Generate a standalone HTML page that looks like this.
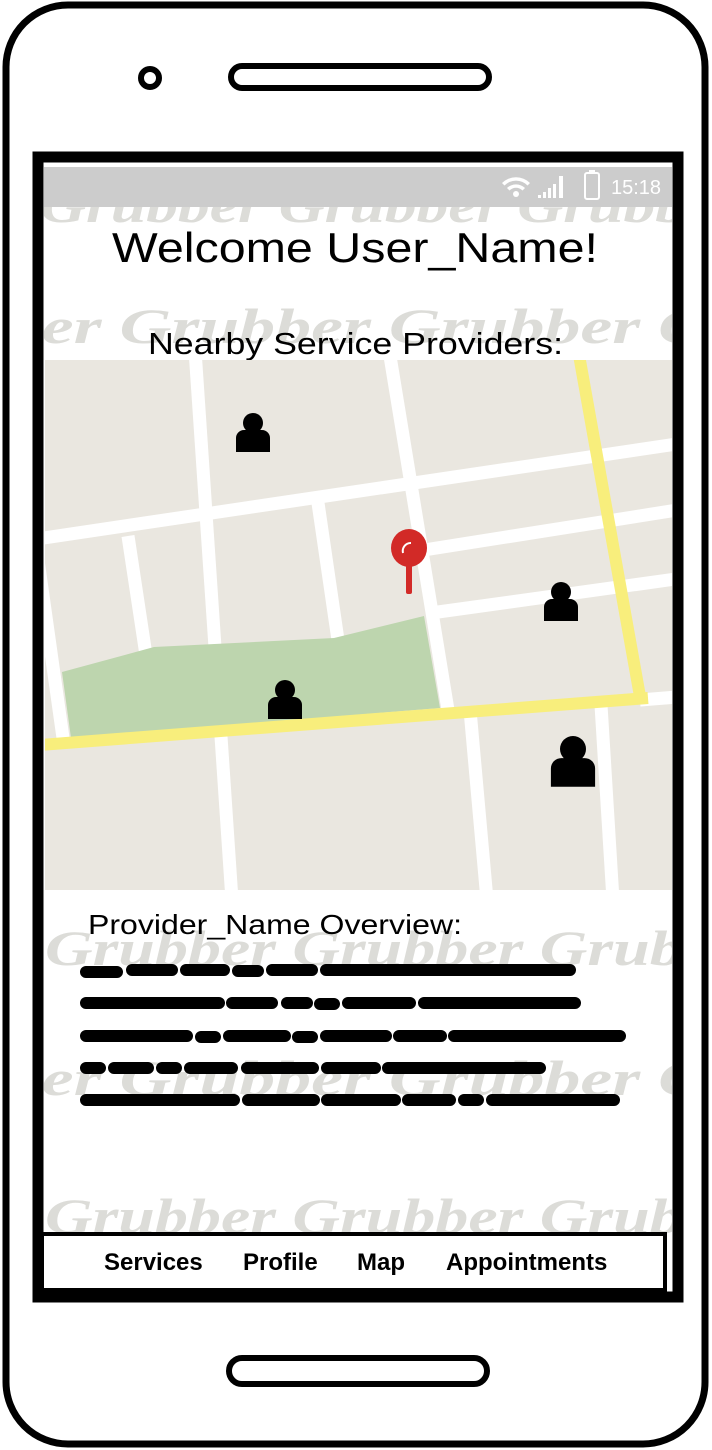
<!DOCTYPE html>
<html><head><meta charset="utf-8"><style>
html,body{margin:0;padding:0;background:#fff;}
svg{display:block}
text{font-family:"Liberation Sans",sans-serif;}
text.wm{font-family:"Liberation Serif",serif;}
</style></head><body>
<svg width="712" height="1450" viewBox="0 0 712 1450" xmlns="http://www.w3.org/2000/svg">
<rect x="0" y="0" width="712" height="1450" fill="#fff"/>
<rect x="6" y="5" width="699" height="1439" rx="62" fill="#fff" stroke="#000" stroke-width="7"/>
<circle cx="150" cy="78" r="9" fill="none" stroke="#000" stroke-width="6"/>
<rect x="231" y="66" width="258" height="22" rx="11" fill="none" stroke="#000" stroke-width="6"/>
<rect x="229" y="1358" width="258" height="26" rx="13" fill="none" stroke="#000" stroke-width="6"/>
<rect x="38" y="157" width="640" height="1140" fill="#fff" stroke="#000" stroke-width="11"/>
<svg x="44" y="162" width="628" height="1130" viewBox="44 162 628 1130">
<g fill="#dcdcd8" font-style="italic" font-weight="bold" font-size="50">
<text class="wm" x="40" y="222" textLength="700" lengthAdjust="spacingAndGlyphs">Grubber Grubber Grubber</text>
<text class="wm" x="-30" y="343" textLength="740" lengthAdjust="spacingAndGlyphs">bber Grubber Grubber G</text>
<text class="wm" x="45" y="965" textLength="700" lengthAdjust="spacingAndGlyphs">Grubber Grubber Grubbe</text>
<text class="wm" x="-30" y="1095" textLength="740" lengthAdjust="spacingAndGlyphs">bber Grubber Grubber G</text>
<text class="wm" x="45" y="1233" textLength="700" lengthAdjust="spacingAndGlyphs">Grubber Grubber Grubbe</text>
</g>
</svg>
<rect x="44" y="167" width="628" height="40" fill="#cccccc"/>
<g fill="#fff">
<path d="M502 183 a20 20 0 0 1 28 0 l-2.5 2.5 a16 16 0 0 0 -23 0z"/>
<path d="M507 188 a13 13 0 0 1 18 0 l-2.5 2.5 a9 9 0 0 0 -13 0z"/>
<circle cx="516" cy="194" r="3"/>
<rect x="538" y="195" width="3" height="3"/><rect x="543" y="192" width="3" height="6"/><rect x="548" y="188" width="3" height="10"/><rect x="553" y="184" width="3" height="14"/><rect x="559" y="176" width="4" height="22"/>
<rect x="585" y="173" width="14" height="26" rx="2" fill="none" stroke="#fff" stroke-width="2"/><rect x="589" y="170" width="6" height="3"/>
<text x="611" y="194" font-size="20" fill="#fff">15:18</text>
</g>
<text x="112" y="262" font-size="42" textLength="486" lengthAdjust="spacingAndGlyphs">Welcome User_Name!</text>
<text x="148" y="354" font-size="31" textLength="415" lengthAdjust="spacingAndGlyphs">Nearby Service Providers:</text>
<svg x="45" y="360" width="627" height="530" viewBox="45 360 627 530">
<rect x="45" y="360" width="627" height="530" fill="#eae7e0"/>
<g stroke="#fff" stroke-width="13" fill="none">
<line x1="195" y1="350" x2="232" y2="900"/>
<line x1="389" y1="350" x2="448" y2="710"/>
<line x1="470" y1="710" x2="487" y2="900"/>
<line x1="30" y1="540" x2="690" y2="442"/>
<line x1="128" y1="536" x2="146" y2="655"/>
<line x1="318" y1="503" x2="338" y2="640"/>
<line x1="424" y1="550" x2="690" y2="508"/>
<line x1="438" y1="612" x2="690" y2="577"/>
<line x1="38" y1="560" x2="64" y2="745"/>
<line x1="601" y1="705" x2="613" y2="900"/>
<line x1="640" y1="700" x2="690" y2="696"/>
</g>
<polygon points="62,672 154,647 334,638 424,616 440,708 71,738" fill="#bdd5ae"/>
<g stroke="#f8ee7c" stroke-width="12" fill="none">
<line x1="40" y1="745" x2="648" y2="698"/>
<line x1="579" y1="355" x2="641" y2="702"/>
</g>
<rect x="406" y="565" width="6" height="29" rx="2" fill="#d22a27"/>
<ellipse cx="409" cy="548" rx="18" ry="19" fill="#d22a27"/>
<path d="M403 553 a8 8 0 0 1 8 -10" stroke="#fff" stroke-width="2" fill="none"/>
<g fill="#000">
<g transform="translate(253,433)"><circle cx="0" cy="-10" r="10"/><path d="M-17 19 v-14 a8 8 0 0 1 8 -8 h18 a8 8 0 0 1 8 8 v14z"/></g>
<g transform="translate(561,602)"><circle cx="0" cy="-10" r="10"/><path d="M-17 19 v-14 a8 8 0 0 1 8 -8 h18 a8 8 0 0 1 8 8 v14z"/></g>
<g transform="translate(285,700)"><circle cx="0" cy="-10" r="10"/><path d="M-17 19 v-14 a8 8 0 0 1 8 -8 h18 a8 8 0 0 1 8 8 v14z"/></g>
<g transform="translate(573,762) scale(1.3)"><circle cx="0" cy="-10" r="10"/><path d="M-17 19 v-14 a8 8 0 0 1 8 -8 h18 a8 8 0 0 1 8 8 v14z"/></g>
</g>
</svg>
<text x="88" y="934" font-size="28" textLength="374" lengthAdjust="spacingAndGlyphs">Provider_Name Overview:</text>
<g stroke="#000" stroke-width="12" stroke-linecap="round" fill="none">
<path d="M86 972 h31 M132 970 h40 M186 970 h38 M238 971 h20 M272 970 h40 M326 970 h244"/>
<path d="M86 1003 h133 M232 1003 h40 M287 1003 h20 M320 1004 h14 M348 1003 h62 M424 1003 h151"/>
<path d="M86 1036 h101 M201 1037 h14 M229 1036 h56 M298 1037 h14 M326 1036 h60 M399 1036 h42 M454 1036 h166"/>
<path d="M86 1068 h14 M114 1068 h34 M162 1068 h14 M190 1068 h42 M247 1068 h66 M327 1068 h48 M388 1068 h152"/>
<path d="M86 1100 h148 M248 1100 h66 M327 1100 h68 M408 1100 h42 M464 1100 h14 M492 1100 h122"/>
</g>
<rect x="42" y="1234" width="623" height="56" fill="#fff" stroke="#000" stroke-width="4"/>
<g font-size="24" font-weight="bold">
<text x="104" y="1270">Services</text>
<text x="243" y="1270">Profile</text>
<text x="357" y="1270">Map</text>
<text x="446" y="1270">Appointments</text>
</g>
</svg>
</body></html>
